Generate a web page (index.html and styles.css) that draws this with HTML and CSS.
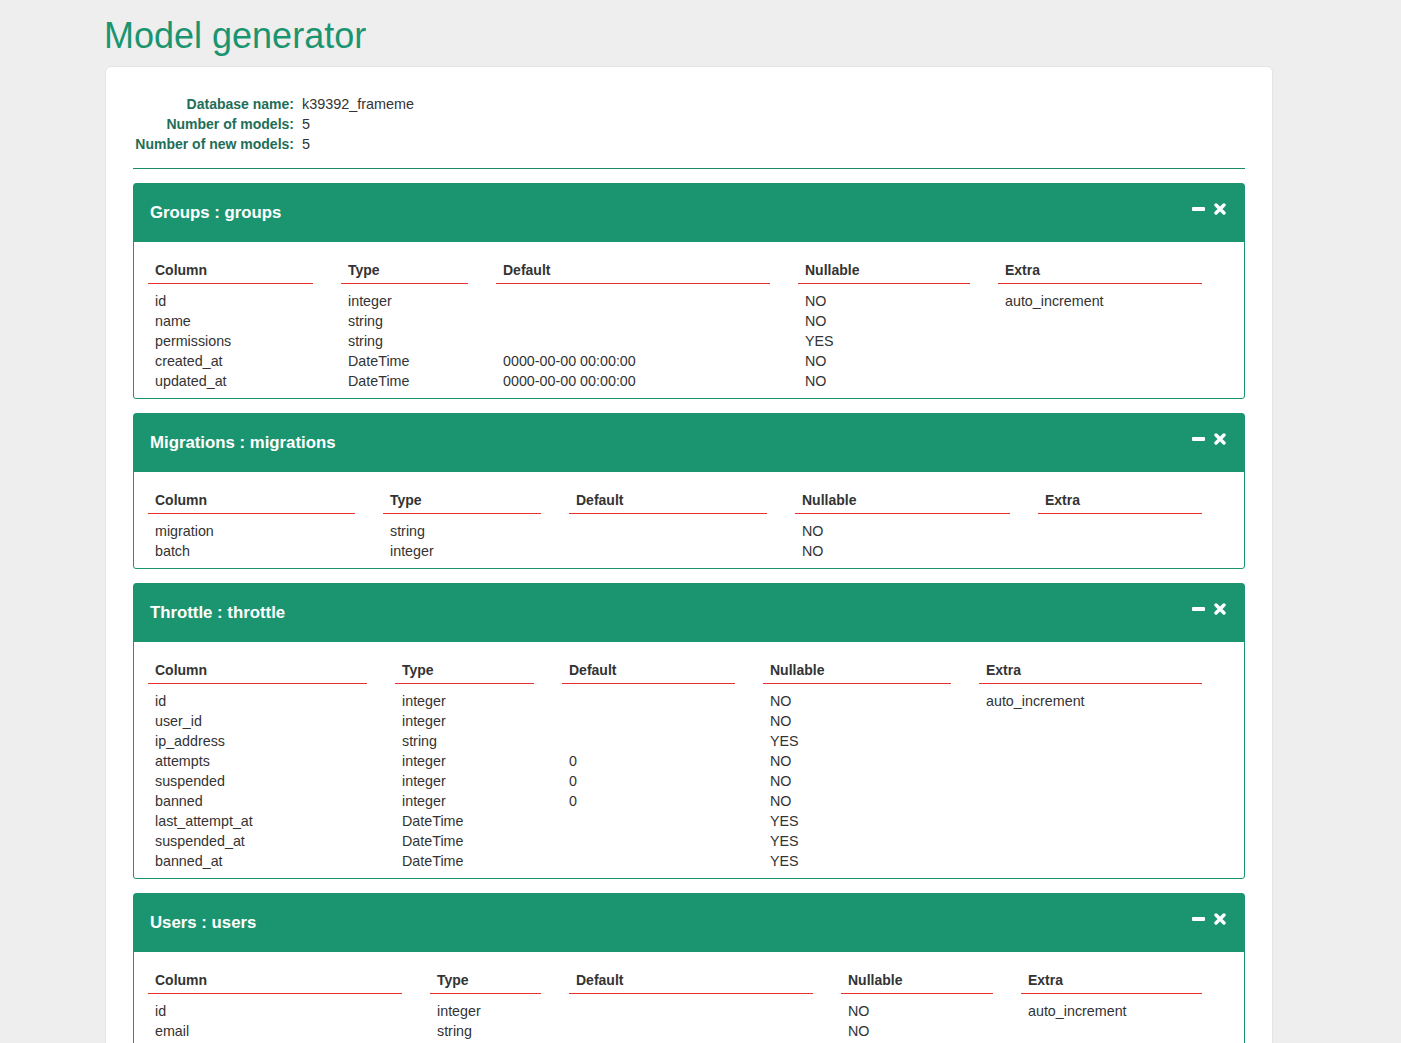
FILE: index.html
```html
<!DOCTYPE html>
<html>
<head>
<meta charset="utf-8">
<title>Model generator</title>
<link rel="stylesheet" href="styles.css">
</head>
<body>
<div class="page">
  <h1 class="title">Model generator</h1>
  <div class="card">
    <dl class="info">
      <dt>Database name:</dt><dd>k39392_frameme</dd>
      <dt>Number of models:</dt><dd>5</dd>
      <dt>Number of new models:</dt><dd>5</dd>
    </dl>
    <hr class="rule">

    <div class="panel">
      <div class="panel-head">
        <span class="panel-title">Groups : groups</span>
        <span class="tools">
          <svg class="ic-min" width="13" height="4" viewBox="0 0 13 4"><rect x="0" y="0" width="13" height="4" rx="1" fill="#fff"/></svg>
          <svg class="ic-x" width="12" height="12" viewBox="0 0 12 12"><path d="M2 2 L10 10 M10 2 L2 10" stroke="#fff" stroke-width="3.4" stroke-linecap="round"/></svg>
        </span>
      </div>
      <div class="panel-body">
        <table class="cols t-groups">
          <colgroup><col class="c1"><col class="c2"><col class="c3"><col class="c4"><col class="c5"></colgroup>
          <thead><tr><th>Column</th><th>Type</th><th>Default</th><th>Nullable</th><th>Extra</th></tr></thead>
          <tbody>
            <tr><td>id</td><td>integer</td><td></td><td>NO</td><td>auto_increment</td></tr>
            <tr><td>name</td><td>string</td><td></td><td>NO</td><td></td></tr>
            <tr><td>permissions</td><td>string</td><td></td><td>YES</td><td></td></tr>
            <tr><td>created_at</td><td>DateTime</td><td>0000-00-00 00:00:00</td><td>NO</td><td></td></tr>
            <tr><td>updated_at</td><td>DateTime</td><td>0000-00-00 00:00:00</td><td>NO</td><td></td></tr>
          </tbody>
        </table>
      </div>
    </div>

    <div class="panel">
      <div class="panel-head">
        <span class="panel-title">Migrations : migrations</span>
        <span class="tools">
          <svg class="ic-min" width="13" height="4" viewBox="0 0 13 4"><rect x="0" y="0" width="13" height="4" rx="1" fill="#fff"/></svg>
          <svg class="ic-x" width="12" height="12" viewBox="0 0 12 12"><path d="M2 2 L10 10 M10 2 L2 10" stroke="#fff" stroke-width="3.4" stroke-linecap="round"/></svg>
        </span>
      </div>
      <div class="panel-body">
        <table class="cols t-migrations">
          <colgroup><col class="c1"><col class="c2"><col class="c3"><col class="c4"><col class="c5"></colgroup>
          <thead><tr><th>Column</th><th>Type</th><th>Default</th><th>Nullable</th><th>Extra</th></tr></thead>
          <tbody>
            <tr><td>migration</td><td>string</td><td></td><td>NO</td><td></td></tr>
            <tr><td>batch</td><td>integer</td><td></td><td>NO</td><td></td></tr>
          </tbody>
        </table>
      </div>
    </div>

    <div class="panel">
      <div class="panel-head">
        <span class="panel-title">Throttle : throttle</span>
        <span class="tools">
          <svg class="ic-min" width="13" height="4" viewBox="0 0 13 4"><rect x="0" y="0" width="13" height="4" rx="1" fill="#fff"/></svg>
          <svg class="ic-x" width="12" height="12" viewBox="0 0 12 12"><path d="M2 2 L10 10 M10 2 L2 10" stroke="#fff" stroke-width="3.4" stroke-linecap="round"/></svg>
        </span>
      </div>
      <div class="panel-body">
        <table class="cols t-throttle">
          <colgroup><col class="c1"><col class="c2"><col class="c3"><col class="c4"><col class="c5"></colgroup>
          <thead><tr><th>Column</th><th>Type</th><th>Default</th><th>Nullable</th><th>Extra</th></tr></thead>
          <tbody>
            <tr><td>id</td><td>integer</td><td></td><td>NO</td><td>auto_increment</td></tr>
            <tr><td>user_id</td><td>integer</td><td></td><td>NO</td><td></td></tr>
            <tr><td>ip_address</td><td>string</td><td></td><td>YES</td><td></td></tr>
            <tr><td>attempts</td><td>integer</td><td>0</td><td>NO</td><td></td></tr>
            <tr><td>suspended</td><td>integer</td><td>0</td><td>NO</td><td></td></tr>
            <tr><td>banned</td><td>integer</td><td>0</td><td>NO</td><td></td></tr>
            <tr><td>last_attempt_at</td><td>DateTime</td><td></td><td>YES</td><td></td></tr>
            <tr><td>suspended_at</td><td>DateTime</td><td></td><td>YES</td><td></td></tr>
            <tr><td>banned_at</td><td>DateTime</td><td></td><td>YES</td><td></td></tr>
          </tbody>
        </table>
      </div>
    </div>

    <div class="panel">
      <div class="panel-head">
        <span class="panel-title">Users : users</span>
        <span class="tools">
          <svg class="ic-min" width="13" height="4" viewBox="0 0 13 4"><rect x="0" y="0" width="13" height="4" rx="1" fill="#fff"/></svg>
          <svg class="ic-x" width="12" height="12" viewBox="0 0 12 12"><path d="M2 2 L10 10 M10 2 L2 10" stroke="#fff" stroke-width="3.4" stroke-linecap="round"/></svg>
        </span>
      </div>
      <div class="panel-body">
        <table class="cols t-users">
          <colgroup><col class="c1"><col class="c2"><col class="c3"><col class="c4"><col class="c5"></colgroup>
          <thead><tr><th>Column</th><th>Type</th><th>Default</th><th>Nullable</th><th>Extra</th></tr></thead>
          <tbody>
            <tr><td>id</td><td>integer</td><td></td><td>NO</td><td>auto_increment</td></tr>
            <tr><td>email</td><td>string</td><td></td><td>NO</td><td></td></tr>
            <tr><td>password</td><td>string</td><td></td><td>NO</td><td></td></tr>
            <tr><td>permissions</td><td>string</td><td></td><td>YES</td><td></td></tr>
            <tr><td>activated</td><td>boolean</td><td>0</td><td>NO</td><td></td></tr>
          </tbody>
        </table>
      </div>
    </div>
  </div>
</div>
</body>
</html>
```

FILE: styles.css
```css
html, body {
  margin: 0;
  padding: 0;
  background: #eeeeee;
  font-family: "Liberation Sans", Arial, sans-serif;
  color: #333;
}

.page {
  margin-left: 105px;
  width: 1168px;
}

.title {
  margin: 16px 0 10px -1px;
  font-size: 36px;
  line-height: 40px;
  font-weight: normal;
  color: #1b9570;
}

.card {
  background: #fff;
  border: 1px solid #e4e4e4;
  border-radius: 6px;
  padding: 27px 27px 20px 27px;
}

.info {
  display: grid;
  grid-template-columns: 161px auto;
  column-gap: 8px;
  margin: 0;
  line-height: 20px;
}

.info dt {
  text-align: right;
  font-weight: bold;
  font-size: 14px;
  color: #1e6e57;
}

.info dd {
  margin: 0;
  font-size: 14.4px;
  color: #333;
}

.rule {
  border: 0;
  border-top: 1px solid #1b8a68;
  margin: 14px 0 14px 0;
  height: 0;
}

.panel {
  border: 1px solid #1b9570;
  border-radius: 3px;
  margin-bottom: 14px;
  background: #fff;
}

.panel-head {
  background: #1b9570;
  height: 58px;
  display: flex;
  align-items: center;
  justify-content: space-between;
  padding: 0 18px 0 16px;
}

.panel-title {
  color: #fff;
  font-weight: bold;
  font-size: 16.8px;
  line-height: 20px;
}

.tools {
  display: flex;
  align-items: center;
  gap: 9px;
  margin-top: -8px;
}

.ic-min, .ic-x {
  display: block;
}

.panel-body {
  padding: 18px 0 7px 0;
}

.cols {
  table-layout: fixed;
  border-collapse: separate;
  border-spacing: 28px 0;
  width: 1110px;
  margin-left: -14px;
  font-size: 14.3px;
}

.cols th {
  text-align: left;
  font-weight: bold;
  font-size: 14px;
  line-height: 20px;
  padding: 0 7px 3px 7px;
  border-bottom: 1px solid #e8302f;
  color: #333;
}

.cols td {
  line-height: 20px;
  padding: 0 7px;
  white-space: nowrap;
  color: #333;
}

.cols tbody tr:first-child td {
  padding-top: 7px;
}

.t-groups .c1 { width: 165px; }
.t-groups .c2 { width: 127px; }
.t-groups .c3 { width: 274px; }
.t-groups .c4 { width: 172px; }
.t-groups .c5 { width: 204px; }

.t-migrations .c1 { width: 207px; }
.t-migrations .c2 { width: 158px; }
.t-migrations .c3 { width: 198px; }
.t-migrations .c4 { width: 215px; }
.t-migrations .c5 { width: 164px; }

.t-throttle .c1 { width: 219px; }
.t-throttle .c2 { width: 139px; }
.t-throttle .c3 { width: 173px; }
.t-throttle .c4 { width: 188px; }
.t-throttle .c5 { width: 223px; }

.t-users .c1 { width: 254px; }
.t-users .c2 { width: 111px; }
.t-users .c3 { width: 244px; }
.t-users .c4 { width: 152px; }
.t-users .c5 { width: 181px; }
```
